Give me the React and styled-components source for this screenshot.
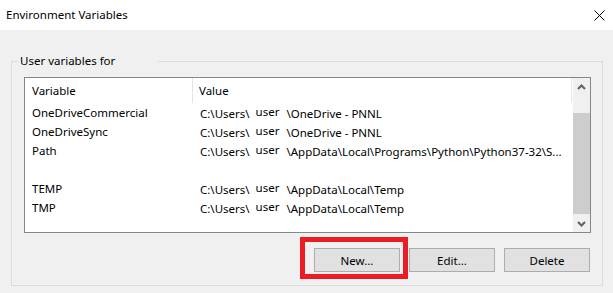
import React from 'react';
import styled, { createGlobalStyle } from 'styled-components';

const rows = [
  { id: 1, name: 'OneDriveCommercial', pre: 'C:\\Users\\', rest: '\\OneDrive - PNNL' },
  { id: 2, name: 'OneDriveSync', pre: 'C:\\Users\\', rest: '\\OneDrive - PNNL' },
  { id: 3, name: 'Path', pre: 'C:\\Users\\', rest: '\\AppData\\Local\\Programs\\Python\\Python37-32\\S...' },
  { id: 4, name: '', pre: '', rest: '' },
  { id: 5, name: 'TEMP', pre: 'C:\\Users\\', rest: '\\AppData\\Local\\Temp' },
  { id: 6, name: 'TMP', pre: 'C:\\Users\\', rest: '\\AppData\\Local\\Temp' },
];

const GlobalStyle = createGlobalStyle`
  html, body {
    margin: 0;
    padding: 0;
    background: #f0f0f0;
  }
  body {
    font-family: "Noto Sans", "Open Sans", sans-serif;
    font-size: 11.5px;
    color: #000;
  }
`;

const Window = styled.div`
  width: 613px;
  height: 293px;
  display: flex;
  flex-direction: column;
  background: #f0f0f0;
  overflow: hidden;
`;

const TitleBar = styled.div`
  height: 30px;
  flex: none;
  background: #fff;
  display: flex;
  align-items: center;
  justify-content: space-between;
  padding: 0 8px 0 6px;
  box-sizing: border-box;
`;

const Title = styled.span`
  line-height: 16px;
`;

const Body = styled.div`
  padding: 23px 10px 0 11px;
`;

const GroupBox = styled.fieldset`
  margin: 0;
  padding: 8px 11px 13px 12px;
  border: 1px solid #dcdcdc;
  min-width: 0;
`;

const Legend = styled.legend`
  margin-left: -6px;
  padding: 0 43px 0 2px;
  line-height: 16px;
`;

const ListView = styled.div`
  height: 156px;
  box-sizing: border-box;
  border: 1px solid #828790;
  background: #fff;
  display: flex;
`;

const ListBody = styled.div`
  flex: 1;
  min-width: 0;
  overflow: hidden;
  display: flex;
  flex-direction: column;
`;

const HeaderRow = styled.div`
  height: 25px;
  flex: none;
  display: flex;
  align-items: center;
  border-right: 1px solid #e5e5e5;
  margin-right: 1px;
`;

const HeaderCell = styled.div`
  width: ${p => p.$w || 'auto'};
  flex: ${p => (p.$w ? 'none' : '1')};
  box-sizing: border-box;
  height: 100%;
  display: flex;
  align-items: center;
  padding-left: ${p => p.$pad}px;
  border-right: ${p => (p.$divider ? '1px solid #e5e5e5' : 'none')};
`;

const Row = styled.div`
  height: 19px;
  flex: none;
  box-sizing: border-box;
  display: flex;
  align-items: center;
  white-space: nowrap;
`;

const NameCell = styled.div`
  width: 168px;
  flex: none;
  padding-left: 7px;
  box-sizing: border-box;
`;

const ValueCell = styled.div`
  flex: 1;
  min-width: 0;
  padding-left: 7px;
  overflow: hidden;
`;

const UserTag = styled.span`
  display: inline-block;
  margin: 0 7px 0 6px;
  vertical-align: 2px;
`;

const ScrollBar = styled.div`
  width: 17px;
  flex: none;
  background: #f0f0f0;
  display: flex;
  flex-direction: column;
`;

const ArrowButton = styled.div`
  height: 17px;
  flex: none;
  display: flex;
  align-items: center;
  justify-content: center;
`;

const Track = styled.div`
  flex: 1;
  display: flex;
  padding-top: 18px;
  padding-bottom: 1px;
`;

const Thumb = styled.div`
  flex: 1;
  background: #cdcdcd;
`;

const ButtonRow = styled.div`
  display: flex;
  justify-content: flex-end;
  gap: 9px;
  margin-top: 15px;
  padding-right: 1px;
`;

const Button = styled.button`
  position: relative;
  width: 86px;
  height: 24px;
  border: 1px solid #adadad;
  background: #e1e1e1;
  font-family: inherit;
  font-size: 11.5px;
  color: #000;
  padding: 0;
`;

const Highlight = styled.span`
  position: absolute;
  top: -12px;
  left: -15px;
  right: -9px;
  bottom: -8px;
  border: 5px solid #ec1c24;
  pointer-events: none;
`;

function Chevron({ up }) {
  return (
    <svg width="9" height="6" viewBox="0 0 9 6">
      <path
        d={up ? 'M1 5 L4.5 1.5 L8 5' : 'M1 1 L4.5 4.5 L8 1'}
        fill="none"
        stroke="#606060"
        strokeWidth="2"
      />
    </svg>
  );
}

function CloseIcon() {
  return (
    <svg width="11" height="11" viewBox="0 0 11 11">
      <path d="M0.5 0.5 L10.5 10.5 M10.5 0.5 L0.5 10.5" stroke="#000" strokeWidth="1" />
    </svg>
  );
}

export default function App() {
  return (
    <Window>
      <GlobalStyle />
      <TitleBar>
        <Title>Environment Variables</Title>
        <CloseIcon />
      </TitleBar>
      <Body>
        <GroupBox>
          <Legend>User variables for</Legend>
          <ListView>
            <ListBody>
              <HeaderRow>
                <HeaderCell $w="168px" $pad={7} $divider>Variable</HeaderCell>
                <HeaderCell $pad={6}>Value</HeaderCell>
              </HeaderRow>
              {rows.map(r => (
                <Row key={r.id}>
                  <NameCell>{r.name}</NameCell>
                  <ValueCell>
                    {r.pre}
                    {r.pre && <UserTag>user</UserTag>}
                    {r.rest}
                  </ValueCell>
                </Row>
              ))}
            </ListBody>
            <ScrollBar>
              <ArrowButton><Chevron up /></ArrowButton>
              <Track><Thumb /></Track>
              <ArrowButton><Chevron /></ArrowButton>
            </ScrollBar>
          </ListView>
          <ButtonRow>
            <Button>New...<Highlight /></Button>
            <Button>Edit...</Button>
            <Button>Delete</Button>
          </ButtonRow>
        </GroupBox>
      </Body>
    </Window>
  );
}
